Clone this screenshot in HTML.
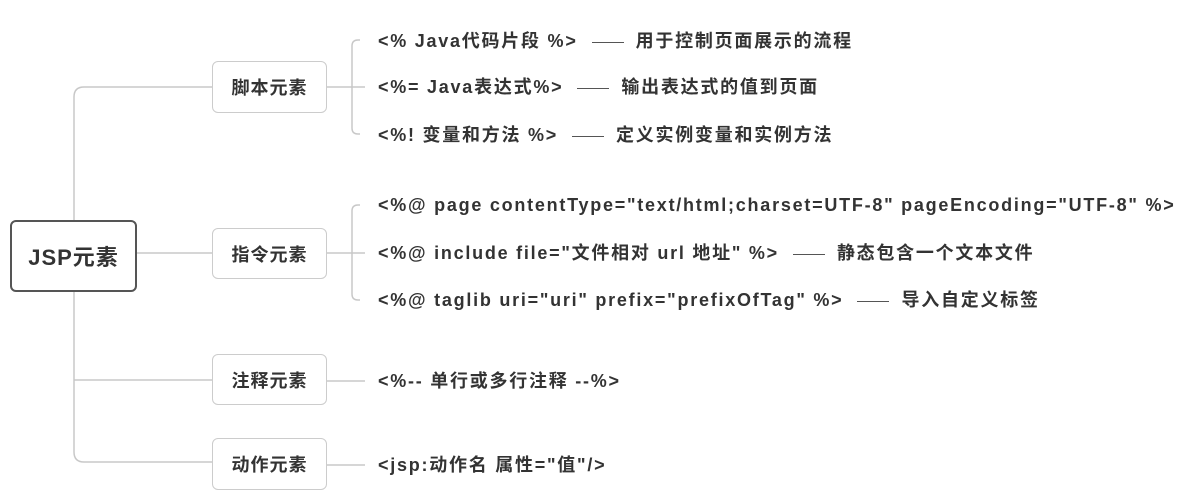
<!DOCTYPE html>
<html><head><meta charset="utf-8"><style>
body{margin:0;width:1183px;height:504px;background:#fff;position:relative;overflow:hidden;font-family:"Liberation Sans","Noto Sans CJK SC",sans-serif;font-weight:bold;color:#333}
.t{position:absolute;font-size:18px;letter-spacing:1.75px;white-space:nowrap;line-height:20px}
.d{display:inline-block;width:32px;height:0;border-top:1px solid #555;vertical-align:middle;margin:0 12px 0 14px}
.b{position:absolute;border:1px solid #ccc;border-radius:6px;box-sizing:border-box;display:flex;align-items:center;justify-content:center;font-size:18px;letter-spacing:1px;background:#fff}
svg{position:absolute;left:0;top:0}
</style></head><body>
<svg width="1183" height="504" fill="none" stroke="#c8c8c8" stroke-width="1.5">
<path d="M212 87 H84 Q74 87 74 97 V220"/>
<path d="M74 292 V452 Q74 462 84 462 H212"/>
<path d="M74 380 H212"/>
<path d="M137 253 H212"/>
<path d="M360 40 H358 Q352 40 352 46 V128 Q352 134 358 134 H360"/><path d="M327 87 H365"/>
<path d="M360 205 H358 Q352 205 352 211 V294 Q352 300 358 300 H360"/><path d="M327 253 H365"/>
<path d="M327 381 H365"/><path d="M327 465 H365"/>
</svg>
<div class="b" style="left:10px;top:220px;width:127px;height:72px;border:2px solid #555;font-size:22px">JSP元素</div>
<div class="b" style="left:212px;top:61px;width:115px;height:52px">脚本元素</div>
<div class="b" style="left:212px;top:228px;width:115px;height:51px">指令元素</div>
<div class="b" style="left:212px;top:354px;width:115px;height:51px">注释元素</div>
<div class="b" style="left:212px;top:438px;width:115px;height:52px">动作元素</div>
<div class="t" style="left:378px;top:31px">&lt;% Java代码片段 %&gt;<span class="d"></span>用于控制页面展示的流程</div>
<div class="t" style="left:378px;top:77px">&lt;%= Java表达式%&gt;<span class="d"></span>输出表达式的值到页面</div>
<div class="t" style="left:378px;top:125px">&lt;%! 变量和方法 %&gt;<span class="d"></span>定义实例变量和实例方法</div>
<div class="t" style="left:378px;top:195px">&lt;%@ page contentType="text/html;charset=UTF-8" pageEncoding="UTF-8" %&gt;</div>
<div class="t" style="left:378px;top:243px">&lt;%@ include file="文件相对 url 地址" %&gt;<span class="d"></span>静态包含一个文本文件</div>
<div class="t" style="left:378px;top:290px">&lt;%@ taglib uri="uri" prefix="prefixOfTag" %&gt;<span class="d"></span>导入自定义标签</div>
<div class="t" style="left:378px;top:371px">&lt;%-- 单行或多行注释 --%&gt;</div>
<div class="t" style="left:378px;top:455px">&lt;jsp:动作名 属性="值"/&gt;</div>
</body></html>
